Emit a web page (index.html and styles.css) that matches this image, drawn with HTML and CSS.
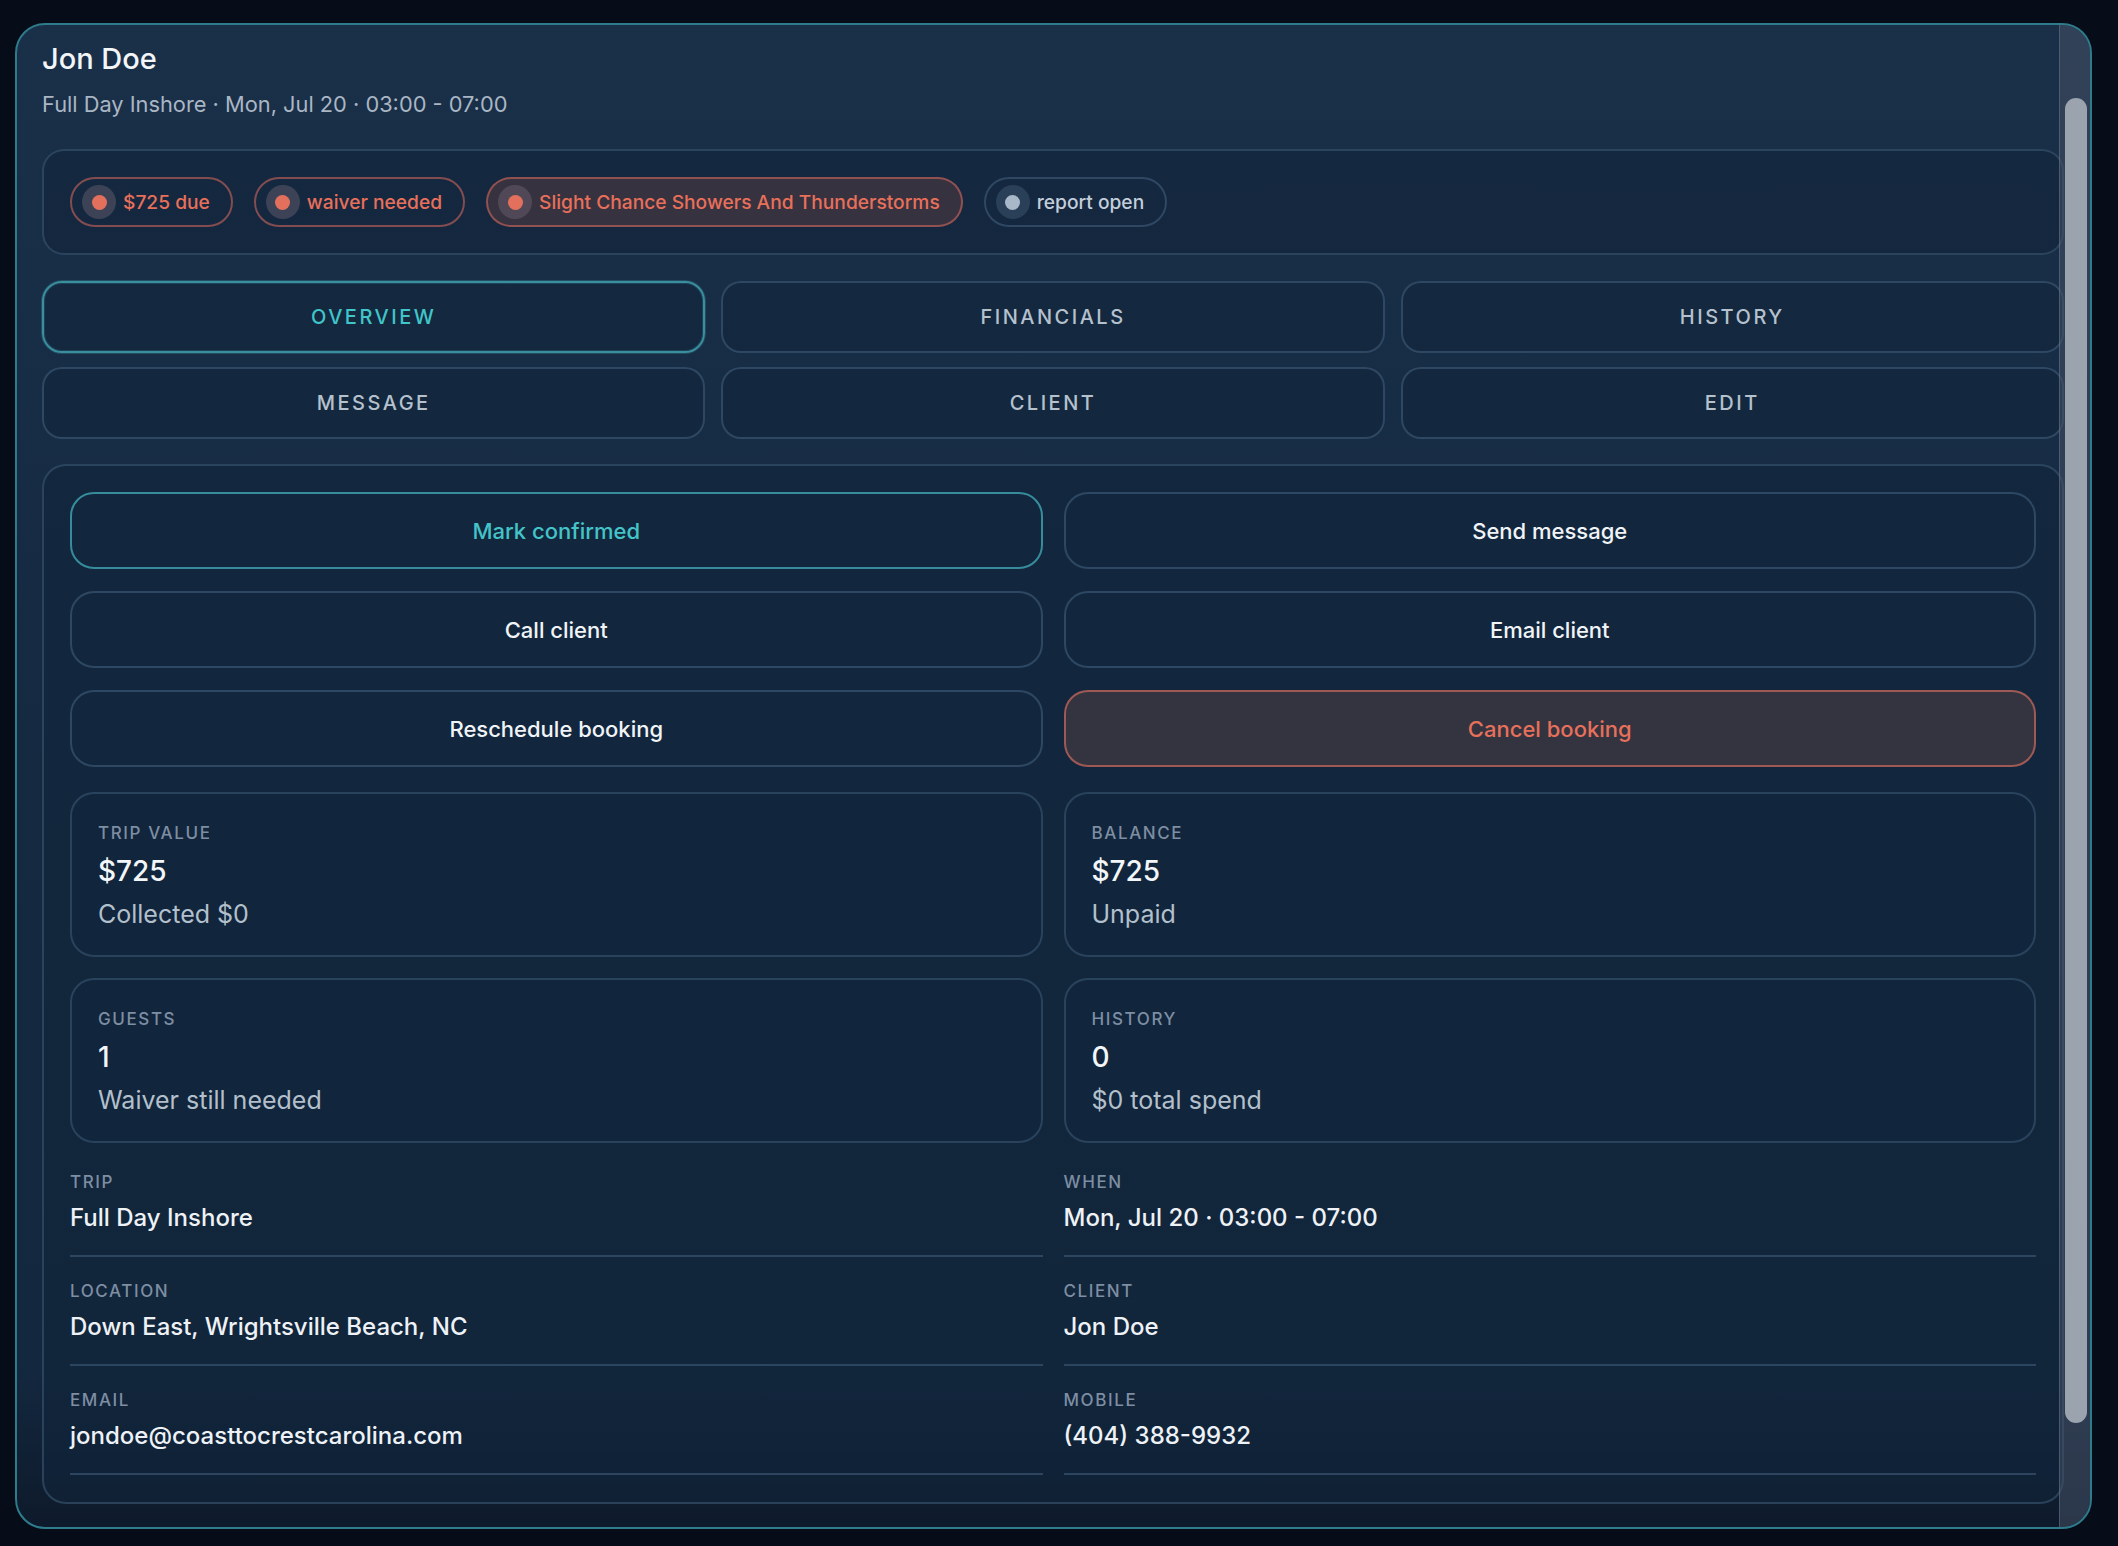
FILE: index.html
```html
<!DOCTYPE html>
<html lang="en">

<head>
    <meta charset="UTF-8">
    <meta name="viewport" content="width=device-width, initial-scale=1.0">
    <title>Booking - Jon Doe</title>
    <link rel="stylesheet" href="styles.css">
</head>

<body>

    <div class="card">
        <div class="header">
            <h1>Jon Doe</h1>
            <p class="subtitle">Full Day Inshore · Mon, Jul 20 · 03:00 - 07:00</p>
        </div>

        <div class="chips">
            <span class="chip chip-alert"><span class="ring"><span class="dot"></span></span>$725 due</span>
            <span class="chip chip-alert"><span class="ring"><span class="dot"></span></span>waiver needed</span>
            <span class="chip chip-alert chip-filled"><span class="ring"><span class="dot"></span></span>Slight Chance Showers And Thunderstorms</span>
            <span class="chip chip-muted"><span class="ring"><span class="dot"></span></span>report open</span>
        </div>

        <div class="tabs">
            <button class="tab active">Overview</button>
            <button class="tab">Financials</button>
            <button class="tab">History</button>
            <button class="tab">Message</button>
            <button class="tab">Client</button>
            <button class="tab">Edit</button>
        </div>

        <div class="panel">
            <div class="actions">
                <button class="action primary">Mark confirmed</button>
                <button class="action">Send message</button>
                <button class="action">Call client</button>
                <button class="action">Email client</button>
                <button class="action">Reschedule booking</button>
                <button class="action danger">Cancel booking</button>
            </div>

            <div class="stats">
                <div class="stat">
                    <div class="stat-label">Trip value</div>
                    <div class="stat-value">$725</div>
                    <div class="stat-sub">Collected $0</div>
                </div>
                <div class="stat">
                    <div class="stat-label">Balance</div>
                    <div class="stat-value">$725</div>
                    <div class="stat-sub">Unpaid</div>
                </div>
                <div class="stat">
                    <div class="stat-label">Guests</div>
                    <div class="stat-value">1</div>
                    <div class="stat-sub">Waiver still needed</div>
                </div>
                <div class="stat">
                    <div class="stat-label">History</div>
                    <div class="stat-value">0</div>
                    <div class="stat-sub">$0 total spend</div>
                </div>
            </div>

            <div class="details">
                <div class="detail">
                    <div class="detail-label">Trip</div>
                    <div class="detail-value">Full Day Inshore</div>
                </div>
                <div class="detail">
                    <div class="detail-label">When</div>
                    <div class="detail-value">Mon, Jul 20 · 03:00 - 07:00</div>
                </div>
                <div class="detail">
                    <div class="detail-label">Location</div>
                    <div class="detail-value">Down East, Wrightsville Beach, NC</div>
                </div>
                <div class="detail">
                    <div class="detail-label">Client</div>
                    <div class="detail-value">Jon Doe</div>
                </div>
                <div class="detail">
                    <div class="detail-label">Email</div>
                    <div class="detail-value">jondoe@coasttocrestcarolina.com</div>
                </div>
                <div class="detail">
                    <div class="detail-label">Mobile</div>
                    <div class="detail-value">(404) 388-9932</div>
                </div>
            </div>
        </div>

        <div class="scrollbar">
            <div class="thumb"></div>
        </div>
    </div>

</body>

</html>
```

FILE: styles.css
```css
* {
    box-sizing: border-box;
}

body {
    font-family: Inter, "Noto Sans", sans-serif;
    background-color: #070d18;
    margin: 0;
    padding: 23px 26px 0 15px;
    color: #eef2f6;
}

.card {
    position: relative;
    height: 1506px;
    border: 2px solid #2e7b8b;
    border-radius: 30px;
    overflow: hidden;
    padding: 16px 26px 24px 25px;
    background: linear-gradient(180deg, #1a2f48 0%, #172c45 25%, #14293f 60%, #13273e 90%, #0e1a2b 100%);
}

/* header */

.header h1 {
    margin: 0;
    font-size: 29px;
    line-height: 36px;
    font-weight: 500;
    color: #f3f6f9;
}

.subtitle {
    margin: 13px 0 0;
    font-size: 21.8px;
    line-height: 28px;
    color: #a9b6c4;
}

/* status chips */

.chips {
    display: flex;
    gap: 21px;
    margin-top: 31px;
    padding: 26px;
    border: 2px solid rgba(74, 104, 134, 0.45);
    border-radius: 22px;
    background: rgba(15, 34, 56, 0.45);
}

.chip {
    display: inline-flex;
    align-items: center;
    gap: 7px;
    height: 50px;
    padding: 0 21px 0 10px;
    border: 2px solid;
    border-radius: 25px;
    font-size: 19.2px;
    font-weight: 500;
}

.chip .ring {
    display: flex;
    align-items: center;
    justify-content: center;
    width: 34px;
    height: 34px;
    border-radius: 50%;
}

.chip .dot {
    width: 15px;
    height: 15px;
    border-radius: 50%;
}

.chip-alert {
    color: #e8705a;
    border-color: rgba(200, 100, 90, 0.62);
}

.chip-alert .ring {
    background: rgba(110, 100, 115, 0.45);
}

.chip-alert .dot {
    background: #e3705c;
}

.chip-filled {
    background: #373240;
}

.chip-muted {
    color: #c3ceda;
    border-color: rgba(74, 104, 134, 0.5);
}

.chip-muted .ring {
    background: #2a3f58;
}

.chip-muted .dot {
    background: #a9b8c8;
}

/* tabs */

.tabs {
    display: grid;
    grid-template-columns: repeat(3, 1fr);
    column-gap: 16px;
    row-gap: 14px;
    margin-top: 26px;
}

.tab {
    height: 72px;
    border: 2px solid rgba(74, 104, 134, 0.5);
    border-radius: 20px;
    background: rgba(18, 38, 60, 0.7);
    color: #b5c1cd;
    font-family: inherit;
    font-size: 20px;
    font-weight: 500;
    letter-spacing: 2.5px;
    text-transform: uppercase;
    cursor: pointer;
}

.tab.active {
    color: #40c5c8;
    border-color: #3a8f9e;
    box-shadow: 0 0 0 1px rgba(70, 170, 185, 0.25), inset 0 0 0 1px rgba(70, 170, 185, 0.2);
}

/* main panel */

.panel {
    margin-top: 25px;
    padding: 26px 26px 27px;
    border: 2px solid rgba(74, 104, 134, 0.45);
    border-radius: 24px;
    background: rgba(16, 36, 58, 0.6);
}

.actions {
    display: grid;
    grid-template-columns: 1fr 1fr;
    column-gap: 21px;
    row-gap: 22px;
}

.action {
    height: 77px;
    border: 2px solid rgba(74, 104, 134, 0.5);
    border-radius: 24px;
    background: #12273e;
    color: #f1f4f7;
    font-family: inherit;
    font-size: 22px;
    font-weight: 500;
    cursor: pointer;
}

.action.primary {
    color: #44c3c8;
    border-color: #378c9b;
}

.action.danger {
    color: #e6705b;
    background: #33343f;
    border-color: rgba(205, 105, 95, 0.7);
}

.stats {
    display: grid;
    grid-template-columns: 1fr 1fr;
    column-gap: 21px;
    row-gap: 21px;
    margin-top: 25px;
}

.stat {
    height: 165px;
    padding: 28px 26px 0;
    border: 2px solid rgba(74, 104, 134, 0.45);
    border-radius: 24px;
    background: #11253c;
}

.stat-label,
.detail-label {
    font-size: 17px;
    line-height: 22px;
    font-weight: 500;
    letter-spacing: 1.6px;
    text-transform: uppercase;
    color: #7e8ea3;
}

.stat-value {
    margin-top: 9px;
    font-size: 28px;
    line-height: 36px;
    font-weight: 500;
    color: #f3f6f9;
}

.stat-sub {
    margin-top: 9px;
    font-size: 25px;
    line-height: 32px;
    color: #b3c0cc;
}

.details {
    display: grid;
    grid-template-columns: 1fr 1fr;
    column-gap: 21px;
    margin-top: 5px;
}

.detail {
    padding: 23px 0 22px;
    border-bottom: 2px solid rgba(74, 104, 134, 0.5);
}

.detail-value {
    margin-top: 10px;
    font-size: 24px;
    line-height: 30px;
    font-weight: 500;
    color: #eef2f6;
}

/* scrollbar drawn over the right edge */

.scrollbar {
    position: absolute;
    top: 0;
    right: 0;
    bottom: 0;
    width: 31px;
    background: rgba(70, 80, 100, 0.55);
    border-left: 1px solid rgba(130, 145, 165, 0.35);
}

.thumb {
    position: absolute;
    top: 73px;
    left: 5px;
    width: 22px;
    height: 1325px;
    border-radius: 11px;
    background: #9aa3ae;
}
```
